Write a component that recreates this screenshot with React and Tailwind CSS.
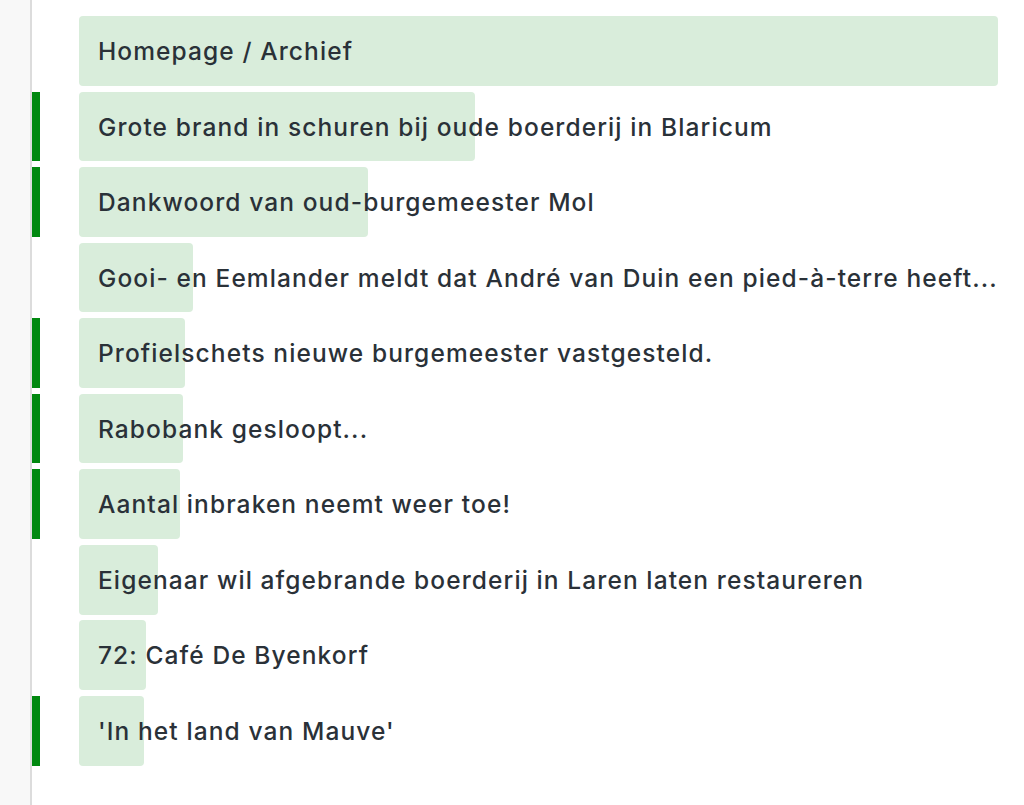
import React from "react";

const rows = [
  { title: "Homepage / Archief", width: 919, flag: false },
  { title: "Grote brand in schuren bij oude boerderij in Blaricum", width: 396, flag: true },
  { title: "Dankwoord van oud-burgemeester Mol", width: 289, flag: true },
  { title: "Gooi- en Eemlander meldt dat André van Duin een pied-à-terre heeft...", width: 114, flag: false },
  { title: "Profielschets nieuwe burgemeester vastgesteld.", width: 106, flag: true },
  { title: "Rabobank gesloopt...", width: 104, flag: true },
  { title: "Aantal inbraken neemt weer toe!", width: 101, flag: true },
  { title: "Eigenaar wil afgebrande boerderij in Laren laten restaureren", width: 79, flag: false },
  { title: "72: Café De Byenkorf", width: 67, flag: false },
  { title: "'In het land van Mauve'", width: 65, flag: true },
];

export default function App() {
  return (
    <div className="flex min-h-[805px] w-[1024px] bg-white font-['Inter',sans-serif]">
      {/* === Side rail === */}
      <div className="w-[32px] shrink-0 border-r-2 border-[#dcdcdc] bg-[#f8f8f8]" />

      {/* === Article list === */}
      <div className="flex flex-1 flex-col gap-[5.8px] pt-4">
        {rows.map((row, i) => (
          <div key={i} className="flex h-[69.75px] items-stretch">
            <div className="w-[47px] shrink-0">
              {row.flag && <div className="h-full w-2 bg-[#00880f]" />}
            </div>
            <div className="relative w-[919px] overflow-hidden">
              <div
                className="absolute inset-y-0 left-0 rounded-[4px] bg-[#d9eddb]"
                style={{ width: row.width + "px" }}
              />
              <div className="relative flex h-full items-center pl-[19px] pt-[1px] text-[24.5px] font-medium tracking-[1.1px] text-[#2a3138]">
                <span className="truncate">{row.title}</span>
              </div>
            </div>
          </div>
        ))}
      </div>
    </div>
  );
}
